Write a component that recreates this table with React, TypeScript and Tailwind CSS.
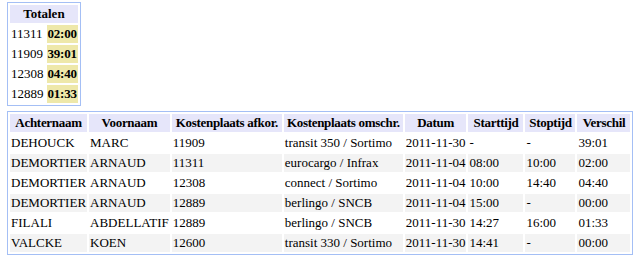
const totals = [
  ["11311", "02:00"],
  ["11909", "39:01"],
  ["12308", "04:40"],
  ["12889", "01:33"],
];

const headers = [
  { label: "Achternaam", w: "w-[73px]" },
  { label: "Voornaam", w: "w-[75px]" },
  { label: "Kostenplaats afkor.", w: "w-[110px]" },
  { label: "Kostenplaats omschr.", w: "w-[119px]" },
  { label: "Datum", w: "w-[59px]" },
  { label: "Starttijd", w: "w-[55px]" },
  { label: "Stoptijd", w: "w-[50px]" },
  { label: "Verschil", w: "w-[53px]" },
];

const rows = [
  ["DEHOUCK", "MARC", "11909", "transit 350 / Sortimo", "2011-11-30", "-", "-", "39:01"],
  ["DEMORTIER", "ARNAUD", "11311", "eurocargo / Infrax", "2011-11-04", "08:00", "10:00", "02:00"],
  ["DEMORTIER", "ARNAUD", "12308", "connect / Sortimo", "2011-11-04", "10:00", "14:40", "04:40"],
  ["DEMORTIER", "ARNAUD", "12889", "berlingo / SNCB", "2011-11-04", "15:00", "-", "00:00"],
  ["FILALI", "ABDELLATIF", "12889", "berlingo / SNCB", "2011-11-30", "14:27", "16:00", "01:33"],
  ["VALCKE", "KOEN", "12600", "transit 330 / Sortimo", "2011-11-30", "14:41", "-", "00:00"],
];

export default function App() {
  return (
    <div className="min-h-screen bg-white pt-[2px] pl-[7px] text-[13px] leading-4 text-black font-['Liberation_Serif',serif]">
      <table className="border border-[#a4bff5] border-separate border-spacing-[2px]">
        <thead>
          <tr>
            <th colSpan={2} className="bg-[#e6e6fa] p-[1px] font-bold text-center h-[18px]">
              Totalen
            </th>
          </tr>
        </thead>
        <tbody>
          {totals.map(([code, time]) => (
            <tr key={code}>
              <td className="p-[1px] h-[18px] w-[32px]">{code}</td>
              <td className="p-[1px] h-[18px] w-[31px] bg-[#eee8aa] font-bold tracking-[-0.2px]">{time}</td>
            </tr>
          ))}
        </tbody>
      </table>

      <table className="mt-[5px] border border-[#a4bff5] border-separate border-spacing-[2px] table-fixed">
        <thead>
          <tr>
            {headers.map((h) => (
              <th
                key={h.label}
                className={`${h.w} bg-[#e6e6fa] p-[1px] h-[18px] font-bold text-center whitespace-nowrap tracking-[-0.3px]`}
              >
                {h.label}
              </th>
            ))}
          </tr>
        </thead>
        <tbody>
          {rows.map((row, i) => (
            <tr key={i}>
              {row.map((cell, j) => (
                <td
                  key={j}
                  className={`p-[1px] h-[18px] whitespace-nowrap overflow-hidden ${i % 2 === 1 ? "bg-[#f3f3f3]" : ""}`}
                >
                  {cell}
                </td>
              ))}
            </tr>
          ))}
        </tbody>
      </table>
    </div>
  );
}
